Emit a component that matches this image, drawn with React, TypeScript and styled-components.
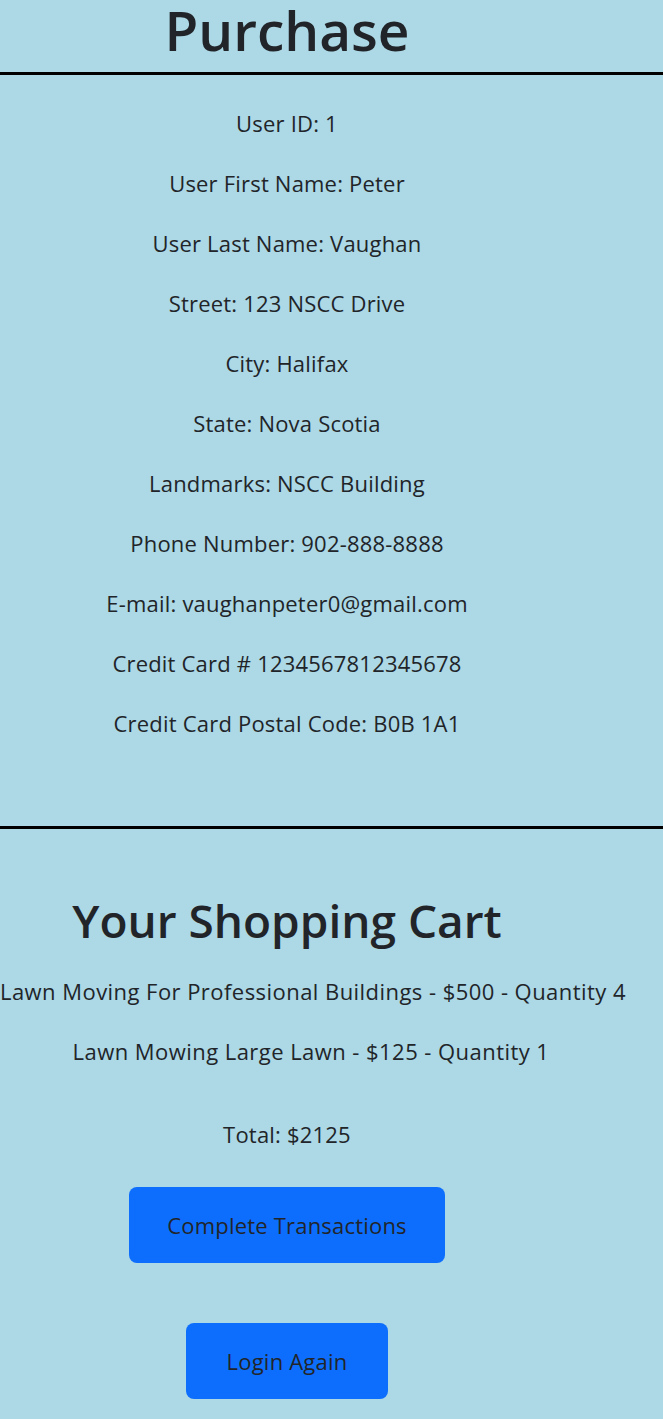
import { createGlobalStyle } from 'styled-components';
import styled from 'styled-components';

const colors = {
  page: '#add8e6',
  text: '#212529',
  primary: '#0d6efd',
};

const GlobalStyle = createGlobalStyle`
  body {
    margin: 0;
    background-color: ${colors.page};
    font-family: "Open Sans", "Noto Sans", sans-serif;
    color: ${colors.text};
  }
`;

const Page = styled.div`
  width: 663px;
  min-height: 1419px;
  overflow: hidden;
`;

const Section = styled.section`
  width: 574px;
  text-align: center;
`;

const CartList = styled.div`
  width: 622px;
  text-align: center;
`;

const Title = styled.h1`
  margin: 0;
  padding-bottom: 12px;
  font-size: 55px;
  font-weight: 600;
  line-height: 60px;
  white-space: nowrap;
`;

const CartTitle = styled.h2`
  margin: 63px 0 0;
  font-size: 46px;
  font-weight: 600;
  line-height: 56px;
  white-space: nowrap;
`;

const Divider = styled.hr<{ $gap?: number }>`
  margin: ${(p) => p.$gap ?? 0}px 0 0;
  border: 0;
  border-top: 3px solid #000;
  opacity: 1;
`;

const Detail = styled.p<{ $gap?: number; $wide?: boolean }>`
  margin: ${(p) => p.$gap ?? 30}px 0 0;
  font-size: 22px;
  line-height: 30px;
  letter-spacing: ${(p) => (p.$wide ? 0.45 : 0.2)}px;
  white-space: nowrap;
`;

const Button = styled.button<{ $gap: number; $padX: number }>`
  display: block;
  margin: ${(p) => p.$gap}px auto 0;
  background: ${colors.primary};
  color: ${colors.text};
  border: 0;
  border-radius: 8px;
  padding: 23px ${(p) => p.$padX}px;
  font-family: inherit;
  font-size: 22px;
  line-height: 30px;
  letter-spacing: 0.2px;
  cursor: pointer;
`;

const details = [
  'User ID: 1',
  'User First Name: Peter',
  'User Last Name: Vaughan',
  'Street: 123 NSCC Drive',
  'City: Halifax',
  'State: Nova Scotia',
  'Landmarks: NSCC Building',
  'Phone Number: 902-888-8888',
  'E-mail: vaughanpeter0@gmail.com',
  'Credit Card # 1234567812345678',
  'Credit Card Postal Code: B0B 1A1',
];

const cart = [
  'Lawn Moving For Professional Buildings - $500 - Quantity 4',
  'Lawn Mowing Large Lawn - $125 - Quantity 1',
];

export default function App() {
  return (
    <Page>
      <GlobalStyle />
      <Section>
        <Title>Purchase</Title>
      </Section>
      <Divider />
      <Section>
        {details.map((d, i) => (
          <Detail key={d} $gap={i === 0 ? 33 : 30}>
            {d}
          </Detail>
        ))}
      </Section>
      <Divider $gap={88} />
      <Section>
        <CartTitle>Your Shopping Cart</CartTitle>
      </Section>
      <CartList>
        {cart.map((c, i) => (
          <Detail key={c} $gap={i === 0 ? 28 : 30} $wide>
            {c}
          </Detail>
        ))}
      </CartList>
      <Section>
        <Detail $gap={53}>Total: $2125</Detail>
        <Button $gap={38} $padX={38}>
          Complete Transactions
        </Button>
        <Button $gap={60} $padX={41}>
          Login Again
        </Button>
      </Section>
    </Page>
  );
}
